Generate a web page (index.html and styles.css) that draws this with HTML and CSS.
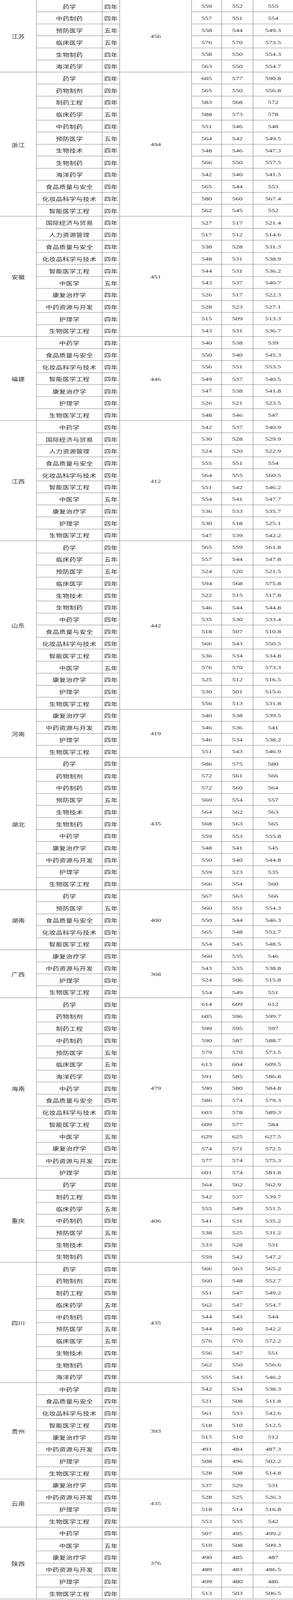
FILE: index.html
```html
<!DOCTYPE html>
<html lang="zh">
<head>
<meta charset="utf-8">
<title>分省录取分数</title>
<link rel="stylesheet" href="styles.css">
</head>
<body>
<div class="page">
<div class="sheet">
<div class="c prov s6">江苏</div><div class="c">药学</div><div class="c">四年</div><div class="c n score s6">456</div><div class="c n">559</div><div class="c n">552</div><div class="c n av">555</div>
<div class="c">中药制药</div><div class="c">四年</div><div class="c n">557</div><div class="c n">551</div><div class="c n av">554</div>
<div class="c">预防医学</div><div class="c">五年</div><div class="c n">558</div><div class="c n">544</div><div class="c n av">549.3</div>
<div class="c">临床医学</div><div class="c">五年</div><div class="c n">576</div><div class="c n">570</div><div class="c n av">573.5</div>
<div class="c">生物制药</div><div class="c">四年</div><div class="c n">558</div><div class="c n">550</div><div class="c n av">554.3</div>
<div class="c">海洋药学</div><div class="c">四年</div><div class="c n">563</div><div class="c n">550</div><div class="c n av">554.7</div>

<div class="c prov s12">浙江</div><div class="c">药学</div><div class="c">四年</div><div class="c n score s12">494</div><div class="c n">605</div><div class="c n">577</div><div class="c n av">590.8</div>
<div class="c">药物制剂</div><div class="c">四年</div><div class="c n">565</div><div class="c n">550</div><div class="c n av">556.8</div>
<div class="c">制药工程</div><div class="c">四年</div><div class="c n">583</div><div class="c n">568</div><div class="c n av">572</div>
<div class="c">临床药学</div><div class="c">五年</div><div class="c n">588</div><div class="c n">573</div><div class="c n av">578</div>
<div class="c">中药制药</div><div class="c">四年</div><div class="c n">551</div><div class="c n">546</div><div class="c n av">548</div>
<div class="c">预防医学</div><div class="c">五年</div><div class="c n">564</div><div class="c n">542</div><div class="c n av">549.5</div>
<div class="c">生物技术</div><div class="c">四年</div><div class="c n">548</div><div class="c n">546</div><div class="c n av">547.3</div>
<div class="c">生物制药</div><div class="c">四年</div><div class="c n">566</div><div class="c n">550</div><div class="c n av">557.5</div>
<div class="c">海洋药学</div><div class="c">四年</div><div class="c n">542</div><div class="c n">540</div><div class="c n av">541.5</div>
<div class="c">食品质量与安全</div><div class="c">四年</div><div class="c n">565</div><div class="c n">544</div><div class="c n av">553</div>
<div class="c">化妆品科学与技术</div><div class="c">四年</div><div class="c n">580</div><div class="c n">560</div><div class="c n av">567.4</div>
<div class="c">智能医学工程</div><div class="c">四年</div><div class="c n">562</div><div class="c n">545</div><div class="c n av">552</div>

<div class="c prov s10">安徽</div><div class="c">国际经济与贸易</div><div class="c">四年</div><div class="c n score s10">451</div><div class="c n">527</div><div class="c n">517</div><div class="c n av">521.4</div>
<div class="c">人力资源管理</div><div class="c">四年</div><div class="c n">517</div><div class="c n">512</div><div class="c n av">514.6</div>
<div class="c">食品质量与安全</div><div class="c">四年</div><div class="c n">538</div><div class="c n">528</div><div class="c n av">531.3</div>
<div class="c">化妆品科学与技术</div><div class="c">四年</div><div class="c n">548</div><div class="c n">531</div><div class="c n av">538.9</div>
<div class="c">智能医学工程</div><div class="c">四年</div><div class="c n">544</div><div class="c n">531</div><div class="c n av">536.2</div>
<div class="c">中医学</div><div class="c">五年</div><div class="c n">543</div><div class="c n">537</div><div class="c n av">540.7</div>
<div class="c">康复治疗学</div><div class="c">四年</div><div class="c n">526</div><div class="c n">517</div><div class="c n av">522.3</div>
<div class="c">中药资源与开发</div><div class="c">四年</div><div class="c n">528</div><div class="c n">523</div><div class="c n av">527.1</div>
<div class="c">护理学</div><div class="c">四年</div><div class="c n">515</div><div class="c n">509</div><div class="c n av">513.3</div>
<div class="c">生物医学工程</div><div class="c">四年</div><div class="c n">543</div><div class="c n">531</div><div class="c n av">536.7</div>

<div class="c prov s7">福建</div><div class="c">中药学</div><div class="c">四年</div><div class="c n score s7">446</div><div class="c n">540</div><div class="c n">538</div><div class="c n av">539</div>
<div class="c">食品质量与安全</div><div class="c">四年</div><div class="c n">550</div><div class="c n">540</div><div class="c n av">545.3</div>
<div class="c">化妆品科学与技术</div><div class="c">四年</div><div class="c n">556</div><div class="c n">551</div><div class="c n av">553.5</div>
<div class="c">智能医学工程</div><div class="c">四年</div><div class="c n">549</div><div class="c n">537</div><div class="c n av">540.5</div>
<div class="c">康复治疗学</div><div class="c">四年</div><div class="c n">547</div><div class="c n">538</div><div class="c n av">541.8</div>
<div class="c">护理学</div><div class="c">四年</div><div class="c n">526</div><div class="c n">521</div><div class="c n av">523.5</div>
<div class="c">生物医学工程</div><div class="c">四年</div><div class="c n">548</div><div class="c n">546</div><div class="c n av">547</div>

<div class="c prov s10">江西</div><div class="c">中药学</div><div class="c">四年</div><div class="c n score s10">412</div><div class="c n">542</div><div class="c n">537</div><div class="c n av">540.9</div>
<div class="c">国际经济与贸易</div><div class="c">四年</div><div class="c n">530</div><div class="c n">528</div><div class="c n av">529.9</div>
<div class="c">人力资源管理</div><div class="c">四年</div><div class="c n">524</div><div class="c n">520</div><div class="c n av">522.9</div>
<div class="c">食品质量与安全</div><div class="c">四年</div><div class="c n">555</div><div class="c n">551</div><div class="c n av">554</div>
<div class="c">化妆品科学与技术</div><div class="c">四年</div><div class="c n">564</div><div class="c n">555</div><div class="c n av">560.5</div>
<div class="c">智能医学工程</div><div class="c">四年</div><div class="c n">551</div><div class="c n">542</div><div class="c n av">546.2</div>
<div class="c">中医学</div><div class="c">五年</div><div class="c n">554</div><div class="c n">541</div><div class="c n av">547.7</div>
<div class="c">康复治疗学</div><div class="c">四年</div><div class="c n">536</div><div class="c n">533</div><div class="c n av">535.7</div>
<div class="c">护理学</div><div class="c">四年</div><div class="c n">530</div><div class="c n">518</div><div class="c n av">525.1</div>
<div class="c">生物医学工程</div><div class="c">四年</div><div class="c n">547</div><div class="c n">539</div><div class="c n av">542.2</div>

<div class="c prov s14">山东</div><div class="c">药学</div><div class="c">四年</div><div class="c n score s14">442</div><div class="c n">565</div><div class="c n">559</div><div class="c n av">561.8</div>
<div class="c">临床药学</div><div class="c">五年</div><div class="c n">557</div><div class="c n">544</div><div class="c n av">547.8</div>
<div class="c">预防医学</div><div class="c">五年</div><div class="c n">524</div><div class="c n">520</div><div class="c n av">521.5</div>
<div class="c">临床医学</div><div class="c">四年</div><div class="c n">594</div><div class="c n">568</div><div class="c n av">575.8</div>
<div class="c">生物技术</div><div class="c">四年</div><div class="c n">522</div><div class="c n">515</div><div class="c n av">517.8</div>
<div class="c">生物制药</div><div class="c">四年</div><div class="c n">546</div><div class="c n">544</div><div class="c n av">544.8</div>
<div class="c">中药学</div><div class="c">四年</div><div class="c n">535</div><div class="c n">530</div><div class="c n av">533.4</div>
<div class="c">食品质量与安全</div><div class="c">四年</div><div class="c n">518</div><div class="c n">507</div><div class="c n av">510.8</div>
<div class="c">化妆品科学与技术</div><div class="c">四年</div><div class="c n">566</div><div class="c n">543</div><div class="c n av">550.5</div>
<div class="c">智能医学工程</div><div class="c">四年</div><div class="c n">536</div><div class="c n">534</div><div class="c n av">534.8</div>
<div class="c">中医学</div><div class="c">五年</div><div class="c n">576</div><div class="c n">570</div><div class="c n av">573.3</div>
<div class="c">康复治疗学</div><div class="c">四年</div><div class="c n">525</div><div class="c n">512</div><div class="c n av">516.5</div>
<div class="c">护理学</div><div class="c">四年</div><div class="c n">530</div><div class="c n">501</div><div class="c n av">515.6</div>
<div class="c">生物医学工程</div><div class="c">四年</div><div class="c n">556</div><div class="c n">513</div><div class="c n av">531.8</div>

<div class="c prov s4">河南</div><div class="c">康复治疗学</div><div class="c">四年</div><div class="c n score s4">419</div><div class="c n">540</div><div class="c n">538</div><div class="c n av">539.5</div>
<div class="c">中药资源与开发</div><div class="c">四年</div><div class="c n">546</div><div class="c n">536</div><div class="c n av">541</div>
<div class="c">护理学</div><div class="c">四年</div><div class="c n">546</div><div class="c n">534</div><div class="c n av">538.2</div>
<div class="c">生物医学工程</div><div class="c">四年</div><div class="c n">551</div><div class="c n">543</div><div class="c n av">546.9</div>

<div class="c prov s11">湖北</div><div class="c">药学</div><div class="c">四年</div><div class="c n score s11">435</div><div class="c n">586</div><div class="c n">575</div><div class="c n av">580</div>
<div class="c">药物制剂</div><div class="c">四年</div><div class="c n">572</div><div class="c n">561</div><div class="c n av">566</div>
<div class="c">中药制药</div><div class="c">四年</div><div class="c n">572</div><div class="c n">560</div><div class="c n av">564</div>
<div class="c">预防医学</div><div class="c">五年</div><div class="c n">560</div><div class="c n">554</div><div class="c n av">557</div>
<div class="c">生物技术</div><div class="c">四年</div><div class="c n">564</div><div class="c n">562</div><div class="c n av">563</div>
<div class="c">生物制药</div><div class="c">四年</div><div class="c n">568</div><div class="c n">563</div><div class="c n av">565</div>
<div class="c">中药学</div><div class="c">四年</div><div class="c n">559</div><div class="c n">553</div><div class="c n av">555.8</div>
<div class="c">康复治疗学</div><div class="c">四年</div><div class="c n">548</div><div class="c n">541</div><div class="c n av">545</div>
<div class="c">中药资源与开发</div><div class="c">四年</div><div class="c n">550</div><div class="c n">540</div><div class="c n av">544.8</div>
<div class="c">护理学</div><div class="c">四年</div><div class="c n">559</div><div class="c n">523</div><div class="c n av">535</div>
<div class="c">生物医学工程</div><div class="c">四年</div><div class="c n">566</div><div class="c n">554</div><div class="c n av">560</div>

<div class="c prov s5">湖南</div><div class="c">药学</div><div class="c">四年</div><div class="c n score s5">400</div><div class="c n">567</div><div class="c n">563</div><div class="c n av">566</div>
<div class="c">预防医学</div><div class="c">五年</div><div class="c n">560</div><div class="c n">551</div><div class="c n av">554.3</div>
<div class="c">食品质量与安全</div><div class="c">四年</div><div class="c n">550</div><div class="c n">544</div><div class="c n av">546.3</div>
<div class="c">化妆品科学与技术</div><div class="c">四年</div><div class="c n">565</div><div class="c n">548</div><div class="c n av">552.7</div>
<div class="c">智能医学工程</div><div class="c">四年</div><div class="c n">554</div><div class="c n">545</div><div class="c n av">548.5</div>

<div class="c prov s4">广西</div><div class="c">康复治疗学</div><div class="c">四年</div><div class="c n score s4">368</div><div class="c n">560</div><div class="c n">535</div><div class="c n av">546</div>
<div class="c">中药资源与开发</div><div class="c">四年</div><div class="c n">543</div><div class="c n">535</div><div class="c n av">538.8</div>
<div class="c">护理学</div><div class="c">四年</div><div class="c n">524</div><div class="c n">506</div><div class="c n av">515.8</div>
<div class="c">生物医学工程</div><div class="c">四年</div><div class="c n">554</div><div class="c n">549</div><div class="c n av">551</div>

<div class="c prov s15">海南</div><div class="c">药学</div><div class="c">四年</div><div class="c n score s15">479</div><div class="c n">614</div><div class="c n">609</div><div class="c n av">612</div>
<div class="c">药物制剂</div><div class="c">四年</div><div class="c n">605</div><div class="c n">596</div><div class="c n av">599.7</div>
<div class="c">制药工程</div><div class="c">四年</div><div class="c n">599</div><div class="c n">595</div><div class="c n av">597</div>
<div class="c">中药制药</div><div class="c">四年</div><div class="c n">590</div><div class="c n">587</div><div class="c n av">588.7</div>
<div class="c">预防医学</div><div class="c">五年</div><div class="c n">579</div><div class="c n">570</div><div class="c n av">573.5</div>
<div class="c">临床医学</div><div class="c">五年</div><div class="c n">613</div><div class="c n">604</div><div class="c n av">609.5</div>
<div class="c">海洋药学</div><div class="c">四年</div><div class="c n">591</div><div class="c n">585</div><div class="c n av">586.8</div>
<div class="c">中药学</div><div class="c">四年</div><div class="c n">590</div><div class="c n">580</div><div class="c n av">584.8</div>
<div class="c">食品质量与安全</div><div class="c">四年</div><div class="c n">586</div><div class="c n">574</div><div class="c n av">579.3</div>
<div class="c">化妆品科学与技术</div><div class="c">四年</div><div class="c n">603</div><div class="c n">578</div><div class="c n av">589.3</div>
<div class="c">智能医学工程</div><div class="c">四年</div><div class="c n">609</div><div class="c n">577</div><div class="c n av">584</div>
<div class="c">中医学</div><div class="c">五年</div><div class="c n">629</div><div class="c n">625</div><div class="c n av">627.5</div>
<div class="c">康复治疗学</div><div class="c">四年</div><div class="c n">574</div><div class="c n">571</div><div class="c n av">572.5</div>
<div class="c">中药资源与开发</div><div class="c">四年</div><div class="c n">577</div><div class="c n">574</div><div class="c n av">575.3</div>
<div class="c">护理学</div><div class="c">四年</div><div class="c n">601</div><div class="c n">574</div><div class="c n av">581.8</div>

<div class="c prov s7">重庆</div><div class="c">药学</div><div class="c">四年</div><div class="c n score s7">406</div><div class="c n">564</div><div class="c n">562</div><div class="c n av">562.9</div>
<div class="c">制药工程</div><div class="c">四年</div><div class="c n">542</div><div class="c n">537</div><div class="c n av">539.7</div>
<div class="c">临床药学</div><div class="c">五年</div><div class="c n">555</div><div class="c n">549</div><div class="c n av">551.5</div>
<div class="c">中药制药</div><div class="c">四年</div><div class="c n">541</div><div class="c n">531</div><div class="c n av">535.2</div>
<div class="c">预防医学</div><div class="c">五年</div><div class="c n">538</div><div class="c n">525</div><div class="c n av">531.2</div>
<div class="c">生物技术</div><div class="c">四年</div><div class="c n">533</div><div class="c n">528</div><div class="c n av">531</div>
<div class="c">生物制药</div><div class="c">四年</div><div class="c n">559</div><div class="c n">542</div><div class="c n av">547.2</div>

<div class="c prov s10">四川</div><div class="c">药学</div><div class="c">四年</div><div class="c n score s10">435</div><div class="c n">566</div><div class="c n">563</div><div class="c n av">565.2</div>
<div class="c">药物制剂</div><div class="c">四年</div><div class="c n">560</div><div class="c n">548</div><div class="c n av">552.7</div>
<div class="c">制药工程</div><div class="c">四年</div><div class="c n">551</div><div class="c n">547</div><div class="c n av">549.2</div>
<div class="c">临床药学</div><div class="c">五年</div><div class="c n">562</div><div class="c n">547</div><div class="c n av">554.7</div>
<div class="c">中药制药</div><div class="c">四年</div><div class="c n">544</div><div class="c n">543</div><div class="c n av">544</div>
<div class="c">预防医学</div><div class="c">五年</div><div class="c n">544</div><div class="c n">540</div><div class="c n av">542.2</div>
<div class="c">临床医学</div><div class="c">五年</div><div class="c n">576</div><div class="c n">570</div><div class="c n av">572.2</div>
<div class="c">生物技术</div><div class="c">四年</div><div class="c n">556</div><div class="c n">547</div><div class="c n av">551</div>
<div class="c">生物制药</div><div class="c">四年</div><div class="c n">562</div><div class="c n">550</div><div class="c n av">556.6</div>
<div class="c">海洋药学</div><div class="c">四年</div><div class="c n">555</div><div class="c n">543</div><div class="c n av">546.2</div>

<div class="c prov s8">贵州</div><div class="c">中药学</div><div class="c">四年</div><div class="c n score s8">393</div><div class="c n">542</div><div class="c n">534</div><div class="c n av">538.3</div>
<div class="c">食品质量与安全</div><div class="c">四年</div><div class="c n">521</div><div class="c n">508</div><div class="c n av">511.8</div>
<div class="c">化妆品科学与技术</div><div class="c">四年</div><div class="c n">561</div><div class="c n">533</div><div class="c n av">542.6</div>
<div class="c">智能医学工程</div><div class="c">四年</div><div class="c n">518</div><div class="c n">510</div><div class="c n av">512.5</div>
<div class="c">康复治疗学</div><div class="c">四年</div><div class="c n">515</div><div class="c n">510</div><div class="c n av">512</div>
<div class="c">中药资源与开发</div><div class="c">四年</div><div class="c n">491</div><div class="c n">484</div><div class="c n av">487.3</div>
<div class="c">护理学</div><div class="c">四年</div><div class="c n">508</div><div class="c n">496</div><div class="c n av">502.2</div>
<div class="c">生物医学工程</div><div class="c">四年</div><div class="c n">528</div><div class="c n">508</div><div class="c n av">514.8</div>

<div class="c prov s4">云南</div><div class="c">康复治疗学</div><div class="c">四年</div><div class="c n score s4">435</div><div class="c n">537</div><div class="c n">529</div><div class="c n av">531</div>
<div class="c">中药资源与开发</div><div class="c">四年</div><div class="c n">528</div><div class="c n">525</div><div class="c n av">526.3</div>
<div class="c">护理学</div><div class="c">四年</div><div class="c n">518</div><div class="c n">514</div><div class="c n av">516.8</div>
<div class="c">生物医学工程</div><div class="c">四年</div><div class="c n">553</div><div class="c n">535</div><div class="c n av">542</div>

<div class="c prov s6">陕西</div><div class="c">中药学</div><div class="c">四年</div><div class="c n score s6">376</div><div class="c n">507</div><div class="c n">495</div><div class="c n av">499.2</div>
<div class="c">中医学</div><div class="c">五年</div><div class="c n">510</div><div class="c n">508</div><div class="c n av">509.3</div>
<div class="c">康复治疗学</div><div class="c">四年</div><div class="c n">490</div><div class="c n">485</div><div class="c n av">487</div>
<div class="c">中药资源与开发</div><div class="c">四年</div><div class="c n">489</div><div class="c n">483</div><div class="c n av">486.5</div>
<div class="c">护理学</div><div class="c">四年</div><div class="c n">499</div><div class="c n">480</div><div class="c n av">486</div>
<div class="c">生物医学工程</div><div class="c">四年</div><div class="c n">513</div><div class="c n">503</div><div class="c n av">506.5</div>
</div>
</div>
</body>
</html>
```
FILE: styles.css
```css
html, body {
  margin: 0;
  padding: 0;
  background: #ffffff;
  overflow: hidden;
}

.page {
  height: 100vh;
  overflow: hidden;
}

.sheet {
  display: grid;
  grid-template-columns: 94px 168px 45px 184px 77px 80px 102px;
  grid-auto-rows: 41.48px;
  width: 750px;
  transform-origin: 0 0;
  color: #333333;
  font-family: "Noto Sans CJK SC", "Noto Sans", sans-serif;
  font-size: 17px;
  letter-spacing: 0.3px;
}

@media (max-height: 5400px) {
  .sheet {
    transform: scaleY(0.7423);
  }
}

.c {
  box-sizing: border-box;
  display: flex;
  align-items: center;
  justify-content: center;
  padding-top: 2px;
  border-right: 1px solid #7a7a7a;
  border-bottom: 1px solid #5c5c5c;
  white-space: nowrap;
  line-height: 1;
}

.n {
  font-family: "Liberation Serif", "Times New Roman", serif;
  font-size: 18px;
  letter-spacing: 0;
}

.av {
  border-right: none;
}

.s4 { grid-row: span 4; }
.s5 { grid-row: span 5; }
.s6 { grid-row: span 6; }
.s7 { grid-row: span 7; }
.s8 { grid-row: span 8; }
.s10 { grid-row: span 10; }
.s11 { grid-row: span 11; }
.s12 { grid-row: span 12; }
.s14 { grid-row: span 14; }
.s15 { grid-row: span 15; }
```
